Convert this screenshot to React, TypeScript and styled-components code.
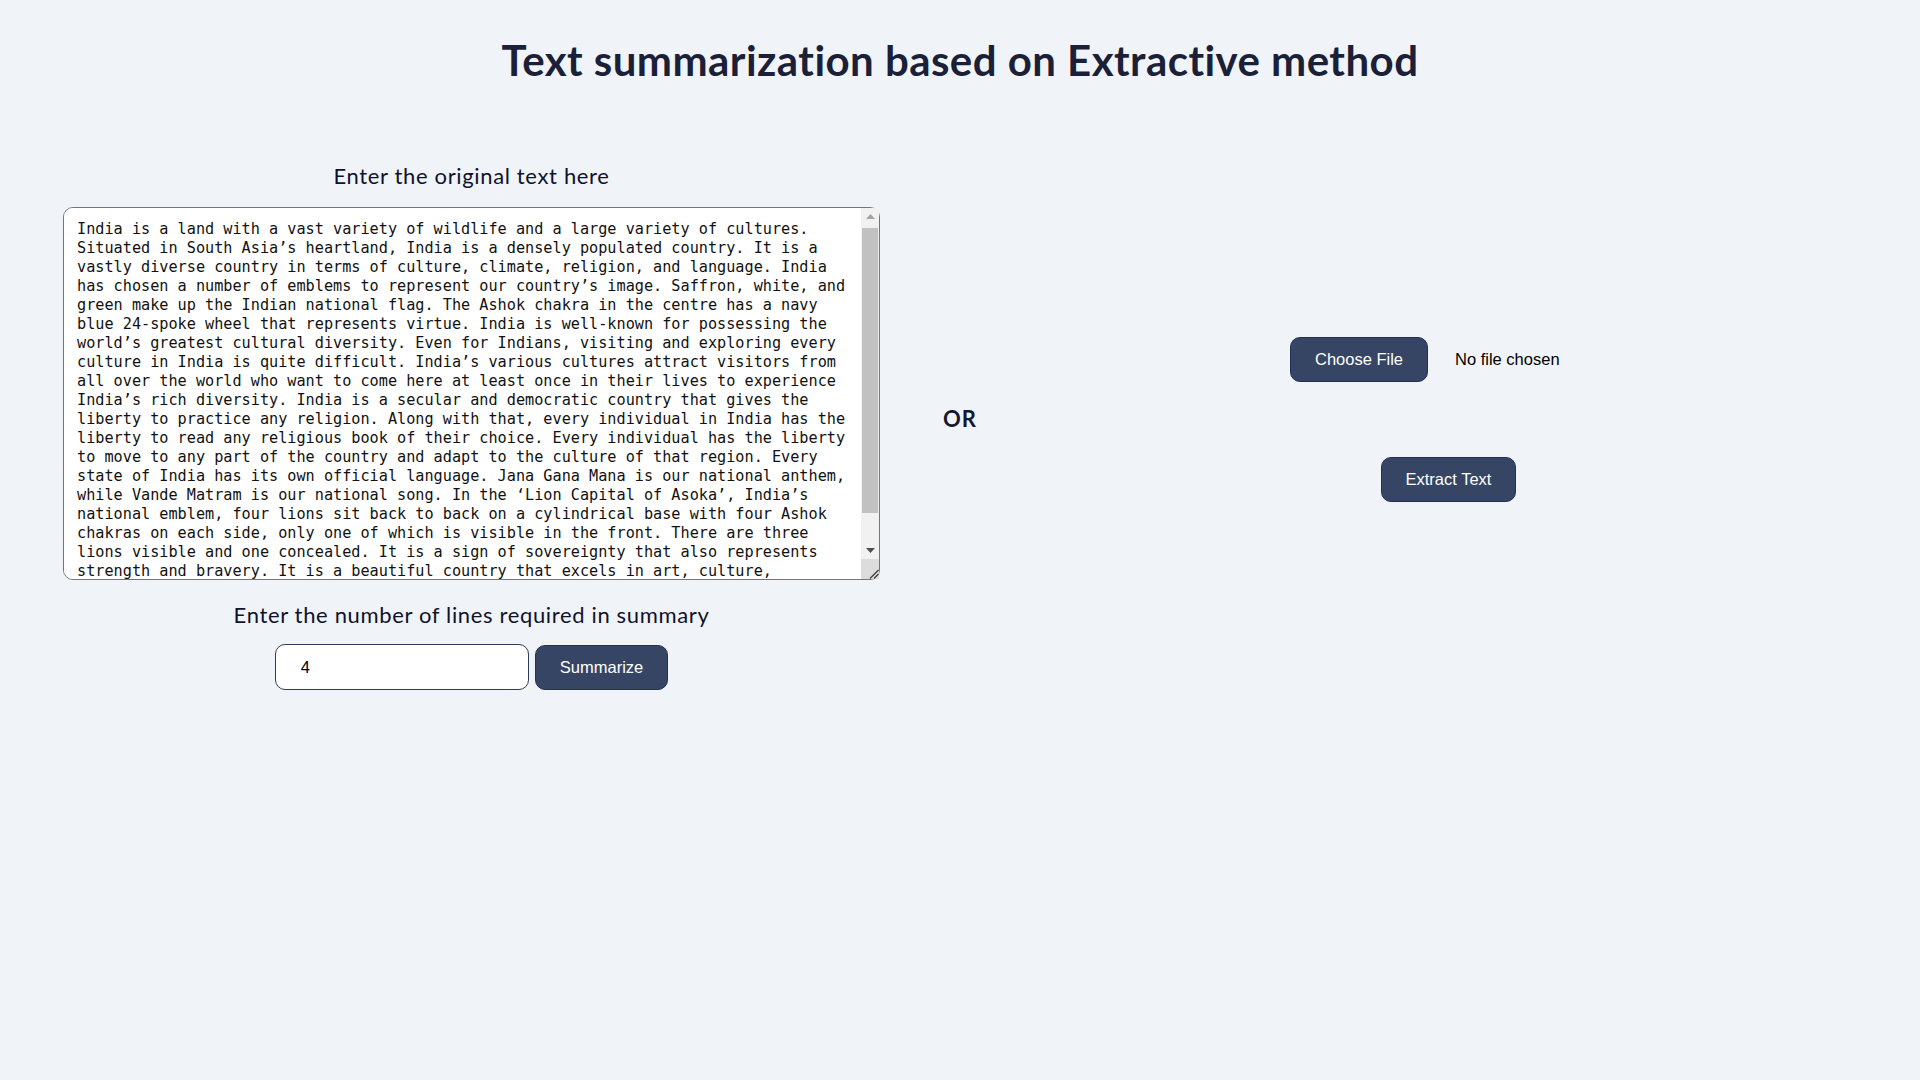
import React from "react";
import styled, { createGlobalStyle } from "styled-components";

const GlobalStyle = createGlobalStyle`
  html, body {
    margin: 0;
    padding: 0;
    background: #f0f4f8;
  }
  body {
    font-family: "Lato", "Noto Sans", sans-serif;
    color: #10122b;
  }
  * { box-sizing: border-box; }
`;

const Page = styled.div`
  min-height: 100vh;
  padding-top: 36px;
  background: #f0f4f8;
`;

const Title = styled.h1`
  margin: 0;
  text-align: center;
  font-family: "Lato", "Noto Sans", sans-serif;
  font-weight: 700;
  font-size: 42px;
  letter-spacing: 0.45px;
  line-height: 48px;
  color: #1b1f38;
`;

const Main = styled.main`
  margin-top: 64px;
  display: grid;
  grid-template-columns: 1fr auto 1fr;
  align-items: center;
`;

const Column = styled.section`
  display: flex;
  flex-direction: column;
  align-items: center;
`;

const Label = styled.label<{ $gapTop: number }>`
  margin-top: ${(p) => p.$gapTop}px;
  font-family: "Lato", "Noto Sans", sans-serif;
  font-size: 22px;
  letter-spacing: 0.65px;
  line-height: 26px;
  color: #10122b;
`;

const TextBox = styled.div`
  position: relative;
  margin-top: 18px;
  width: 817px;
  height: 373px;
`;

const SourceText = styled.textarea`
  display: block;
  width: 100%;
  height: 100%;
  padding: 12px 27px 12px 13px;
  border: 1px solid #767676;
  border-radius: 10px;
  background: #ffffff;
  color: #111111;
  font-family: "DejaVu Sans Mono", "Liberation Mono", monospace;
  font-size: 15.2px;
  line-height: 19px;
  resize: none;
  outline: none;
  overflow-y: auto;
`;

const ScrollBar = styled.div`
  position: absolute;
  top: 1px;
  right: 1px;
  bottom: 1px;
  width: 18px;
  display: flex;
  flex-direction: column;
  background: #f1f1f1;
  border-top-right-radius: 3px;
  pointer-events: none;
`;

const ArrowButton = styled.div`
  height: 17px;
  display: flex;
  align-items: center;
  justify-content: center;
  flex: none;
`;

const Track = styled.div`
  flex: 1;
  padding: 3px 1px 0 1px;
`;

const Thumb = styled.div`
  height: 285px;
  background: #c1c1c1;
`;

const Corner = styled.div`
  height: 20px;
  flex: none;
  background: #dcdcdc;
  display: flex;
  align-items: flex-end;
  justify-content: flex-end;
`;

const InputRow = styled.div`
  margin-top: 16px;
  display: flex;
  align-items: center;
  gap: 6px;
`;

const LinesInput = styled.input`
  width: 254px;
  height: 46px;
  padding: 0 25px;
  border: 1px solid #2f3b57;
  border-radius: 10px;
  background: #ffffff;
  font-family: "Liberation Sans", Arial, sans-serif;
  font-size: 16.5px;
  color: #000000;
  outline: none;
`;

const ActionButton = styled.button`
  height: 45px;
  padding: 0 24px;
  border: 1px solid #22315a;
  border-radius: 10px;
  background: #374564;
  color: #ffffff;
  font-family: "Liberation Sans", Arial, sans-serif;
  font-size: 16.5px;
  cursor: pointer;
`;

const OrText = styled.div`
  font-family: "Lato", "Noto Sans", sans-serif;
  font-weight: 700;
  font-size: 22px;
  letter-spacing: 1px;
  line-height: 26px;
  color: #14182e;
`;

const RightColumn = styled.section`
  display: flex;
  flex-direction: column;
  align-items: center;
  gap: 75px;
`;

const FileRow = styled.div`
  width: 317px;
  display: flex;
  align-items: center;
  gap: 27px;
`;

const FileName = styled.span`
  font-family: "Liberation Sans", Arial, sans-serif;
  font-size: 16.5px;
  color: #000000;
`;

const sample =
  "India is a land with a vast variety of wildlife and a large variety of cultures. Situated in South Asia’s heartland, India is a densely populated country. It is a vastly diverse country in terms of culture, climate, religion, and language. India has chosen a number of emblems to represent our country’s image. Saffron, white, and green make up the Indian national flag. The Ashok chakra in the centre has a navy blue 24-spoke wheel that represents virtue. India is well-known for possessing the world’s greatest cultural diversity. Even for Indians, visiting and exploring every culture in India is quite difficult. India’s various cultures attract visitors from all over the world who want to come here at least once in their lives to experience India’s rich diversity. India is a secular and democratic country that gives the liberty to practice any religion. Along with that, every individual in India has the liberty to read any religious book of their choice. Every individual has the liberty to move to any part of the country and adapt to the culture of that region. Every state of India has its own official language. Jana Gana Mana is our national anthem, while Vande Matram is our national song. In the ‘Lion Capital of Asoka’, India’s national emblem, four lions sit back to back on a cylindrical base with four Ashok chakras on each side, only one of which is visible in the front. There are three lions visible and one concealed. It is a sign of sovereignty that also represents strength and bravery. It is a beautiful country that excels in art, culture, literature, and heritage. India is a land of diverse festivals, traditions, and cuisines that make it truly unique.";

function Arrow({ up, color }: { up: boolean; color: string }) {
  return (
    <svg width="9" height="5" viewBox="0 0 9 5">
      <polygon points={up ? "0,5 9,5 4.5,0" : "0,0 9,0 4.5,5"} fill={color} />
    </svg>
  );
}

function Grip() {
  return (
    <svg width="12" height="12" viewBox="0 0 12 12">
      <line x1="3" y1="11.5" x2="11.5" y2="3" stroke="#3a3a3a" strokeWidth="1.2" />
      <line x1="7" y1="11.5" x2="11.5" y2="7" stroke="#3a3a3a" strokeWidth="1.2" />
    </svg>
  );
}

export default function App() {
  return (
    <Page>
      <GlobalStyle />
      <Title>Text summarization based on Extractive method</Title>
      <Main>
        <Column>
          <Label $gapTop={15} htmlFor="source">
            Enter the original text here
          </Label>
          <TextBox>
            <SourceText id="source" defaultValue={sample} spellCheck={false} />
            <ScrollBar aria-hidden="true">
              <ArrowButton>
                <Arrow up color="#a3a3a3" />
              </ArrowButton>
              <Track>
                <Thumb />
              </Track>
              <ArrowButton>
                <Arrow up={false} color="#505050" />
              </ArrowButton>
              <Corner>
                <Grip />
              </Corner>
            </ScrollBar>
          </TextBox>
          <Label $gapTop={22} htmlFor="lines">
            Enter the number of lines required in summary
          </Label>
          <InputRow>
            <LinesInput id="lines" type="text" defaultValue="4" />
            <ActionButton type="button">Summarize</ActionButton>
          </InputRow>
        </Column>
        <OrText>OR</OrText>
        <RightColumn>
          <FileRow>
            <ActionButton type="button">Choose File</ActionButton>
            <FileName>No file chosen</FileName>
          </FileRow>
          <ActionButton type="button">Extract Text</ActionButton>
        </RightColumn>
      </Main>
    </Page>
  );
}
